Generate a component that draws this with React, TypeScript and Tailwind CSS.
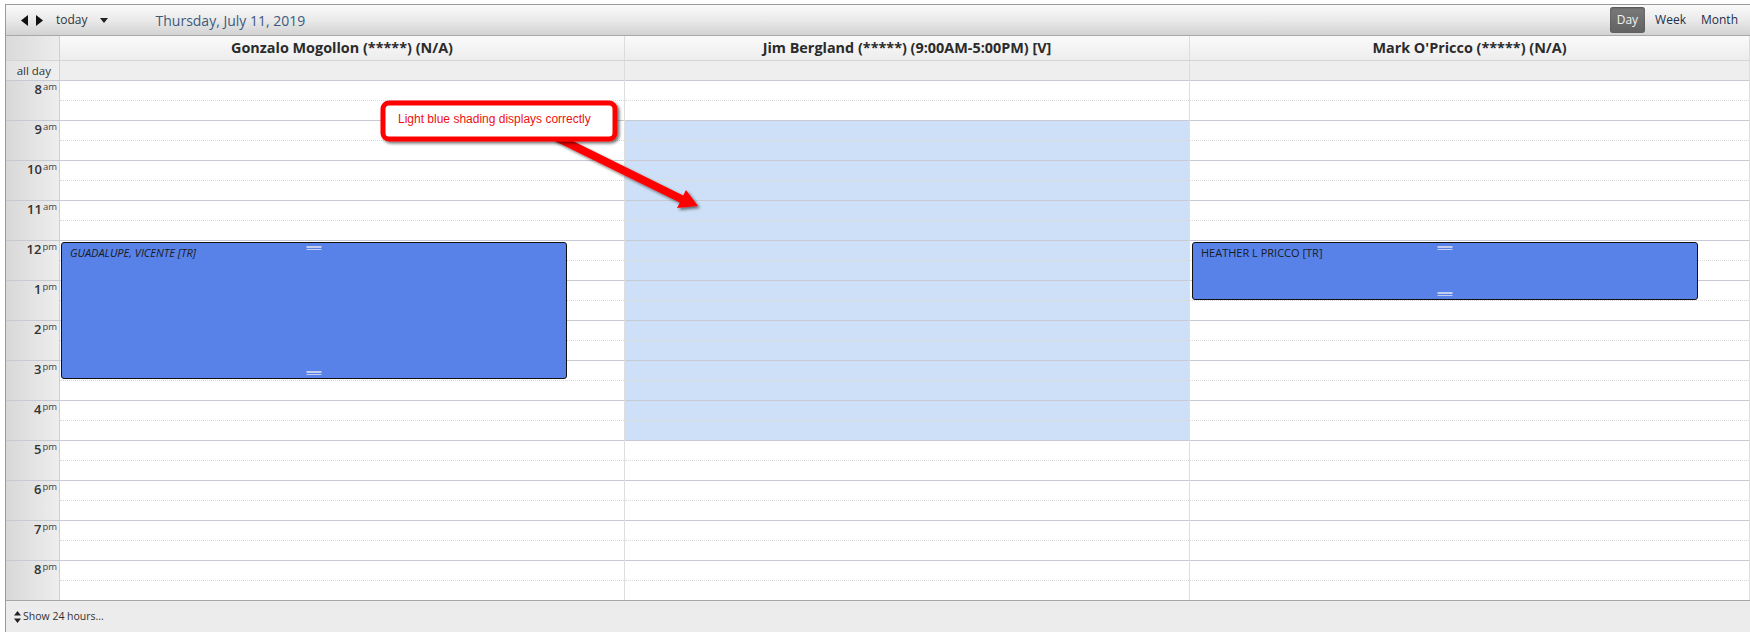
import { ReactNode } from "react";

type Resource = { name: string; business?: [number, number] };

type CalEvent = {
    col: number;
    title: string;
    top: number;
    height: number;
    left: number;
    italic?: boolean;
};

const resources: Resource[] = [
    { name: "Gonzalo Mogollon (*****) (N/A)" },
    { name: "Jim Bergland (*****) (9:00AM-5:00PM) [V]", business: [9, 17] },
    { name: "Mark O'Pricco (*****) (N/A)" },
];

const hours = [8, 9, 10, 11, 12, 13, 14, 15, 16, 17, 18, 19, 20];

const events: CalEvent[] = [
    { col: 0, title: "GUADALUPE, VICENTE [TR]", top: 162, height: 137, left: 1, italic: true },
    { col: 2, title: "HEATHER L PRICCO [TR]", top: 162, height: 58, left: 2 },
];

const cols = "grid grid-cols-[54px_565px_565px_1fr]";

function hourLabel(h: number) {
    const n = h > 12 ? h - 12 : h;
    return { n, suffix: h < 12 ? "am" : "pm" };
}

function Handle({ className }: { className: string }) {
    return (
        <div
            className={`absolute left-1/2 -translate-x-1/2 w-[15px] h-[4px] border-t-2 border-b border-[#c3cdf0] ${className}`}
        />
    );
}

function EventBox({ ev }: { ev: CalEvent }) {
    return (
        <div
            className="absolute w-[506px] bg-[#5882e8] border border-[#111] rounded-[3px]"
            style={{ top: ev.top, height: ev.height, left: ev.left }}
        >
            <Handle className="top-[3px]" />
            <div
                className={`pl-[8px] pt-[3px] text-[11px] leading-[14px] text-[#1a1a1a] ${ev.italic ? "italic" : ""}`}
            >
                {ev.title}
            </div>
            <Handle className="bottom-[3px]" />
        </div>
    );
}

function Btn({ children, active }: { children: ReactNode; active?: boolean }) {
    return (
        <div
            className={
                active
                    ? "h-[26px] px-[7px] flex items-center rounded-[3px] bg-linear-to-b from-[#7a7a7a] to-[#626262] text-[#f2f2f2] shadow-[inset_0_1px_2px_rgba(0,0,0,0.35)]"
                    : "h-[26px] px-[5px] flex items-center text-[#1e2f4a]"
            }
        >
            {children}
        </div>
    );
}

function Callout() {
    return (
        <svg className="absolute left-0 top-0 pointer-events-none" width="1750" height="632">
            <defs>
                <filter id="sh" x="-20%" y="-20%" width="140%" height="140%">
                    <feDropShadow dx="2" dy="2" stdDeviation="1.4" floodColor="#000" floodOpacity="0.55" />
                </filter>
            </defs>
            <polygon
                points="556.7,133.1 683.2,195.4 686,190 698,206 677,208 679.8,202.6 553.3,140.3"
                fill="#ff0000"
                filter="url(#sh)"
            />
            <rect x="383" y="103" width="232" height="36" rx="6" fill="#fff" stroke="#ff0000" strokeWidth="5" filter="url(#sh)" />
        </svg>
    );
}

export default function App() {
    return (
        <div className="relative w-[1750px] h-[632px] bg-white pt-[4px] pl-[5px] font-['Open_Sans',sans-serif] text-[#333] overflow-hidden">
            <div className="border-l border-t border-[#9a9a9a]">
                {/* toolbar */}
                <div className="h-[31px] flex items-center border-b border-[#a9a9a9] bg-linear-to-b from-[#fafafa] via-[#eaeaea] to-[#d2d2d2]">
                    <div className="flex items-center gap-[8px] pl-[15px]">
                        <svg width="7" height="11" viewBox="0 0 7 11">
                            <path d="M7 0 L0 5.5 L7 11 Z" fill="#111" />
                        </svg>
                        <svg width="7" height="11" viewBox="0 0 7 11">
                            <path d="M0 0 L7 5.5 L0 11 Z" fill="#111" />
                        </svg>
                    </div>
                    <span className="ml-[13px] text-[12px] text-[#333]">today</span>
                    <svg className="ml-[12px]" width="8" height="5" viewBox="0 0 8 5">
                        <path d="M0 0 L8 0 L4 5 Z" fill="#222" />
                    </svg>
                    <span className="ml-[48px] text-[14px] text-[#3d5a7e]">Thursday, July 11, 2019</span>
                    <div className="ml-auto mr-[7px] flex items-center gap-[5px] text-[12px]">
                        <Btn active>Day</Btn>
                        <Btn>Week</Btn>
                        <Btn>Month</Btn>
                    </div>
                </div>

                {/* resource headers */}
                <div className={`${cols} h-[25px] border-b border-[#d4d4d4]`}>
                    <div className="border-r border-[#d0d0d0] bg-linear-to-r from-[#dadada] to-[#ececec]" />
                    {resources.map((r, i) => (
                        <div
                            key={i}
                            className="flex items-center justify-center border-r border-[#dcdcdc] bg-linear-to-b from-[#fafafa] to-[#ededed] text-[14.4px] font-bold text-[#2b2b2b]"
                        >
                            {r.name}
                        </div>
                    ))}
                </div>

                {/* all day row */}
                <div className={`${cols} h-[19px] bg-[#eeeeee]`}>
                    <div className="border-r border-[#d0d0d0] bg-linear-to-r from-[#e2e2e2] to-[#efefef] flex items-center justify-end pr-[8px] text-[11.5px] text-[#333]">
                        all day
                    </div>
                    {resources.map((_, i) => (
                        <div key={i} className="border-r border-[#dcdcdc]" />
                    ))}
                </div>

                {/* time grid */}
                <div className={cols}>
                    <div className="border-r border-[#cfcfcf] bg-linear-to-r from-[#d8d8d8] to-[#eeeeee]">
                        {hours.map((h) => {
                            const { n, suffix } = hourLabel(h);
                            return (
                                <div key={h} className="h-[40px] border-t border-[#c7cad2] flex justify-end pr-[2px] pt-[1px]">
                                    <span className="text-[13px] leading-[15px] font-semibold text-[#333]">{n}</span>
                                    <span className="text-[9.5px] leading-[10px] text-[#444] ml-[1px]">{suffix}</span>
                                </div>
                            );
                        })}
                    </div>
                    {resources.map((r, ci) => (
                        <div key={ci} className="relative border-r border-[#dedede]">
                            {hours.map((h) => {
                                const open = r.business && h >= r.business[0] && h < r.business[1];
                                const bg = open ? "bg-[#cde0f7]" : "";
                                return (
                                    <div key={h}>
                                        <div className={`h-[20px] border-t border-[#c7cad2] ${bg}`} />
                                        <div className={`h-[20px] border-t border-dotted border-[#d9d9d9] ${bg}`} />
                                    </div>
                                );
                            })}
                            {events
                                .filter((e) => e.col === ci)
                                .map((e, k) => (
                                    <EventBox key={k} ev={e} />
                                ))}
                        </div>
                    ))}
                </div>

                {/* footer */}
                <div className="h-[32px] border-t border-[#a6a6a6] bg-[#ececec] flex items-center pl-[8px] text-[10.5px] text-[#333]">
                    <svg width="7" height="12" viewBox="0 0 7 12" className="mr-[2px]">
                        <path d="M3.5 0 L7 4.5 L0 4.5 Z M3.5 12 L7 7.5 L0 7.5 Z" fill="#222" />
                    </svg>
                    Show 24 hours...
                </div>
            </div>

            <Callout />
            <div className="absolute left-[398px] top-[111px] text-[12px] leading-[16px] text-[#ee1111] font-['Liberation_Sans_Narrow','Liberation_Sans',sans-serif]">
                Light blue shading displays correctly
            </div>
        </div>
    );
}
